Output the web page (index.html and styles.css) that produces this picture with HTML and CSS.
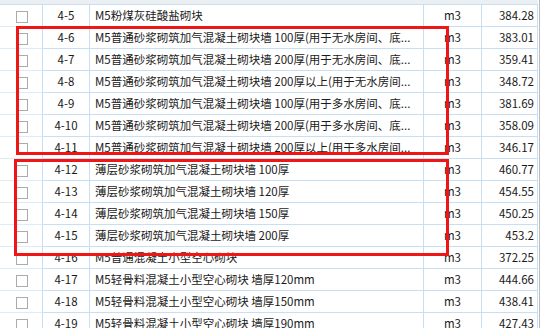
FILE: index.html
```html
<!DOCTYPE html>
<html lang="zh-CN">
<head>
<meta charset="utf-8">
<link rel="stylesheet" href="styles.css">
</head>
<body>
<div class="page">
  <div class="table">
    <div class="head"></div>
    <div class="row"><div class="c chk"><span class="box"></span></div><div class="c code">4-5</div><div class="c name">M5粉煤灰硅酸盐砌块</div><div class="c unit">m3</div><div class="c price">384.28</div></div>
    <div class="row"><div class="c chk"><span class="box"></span></div><div class="c code">4-6</div><div class="c name">M5普通砂浆砌筑加气混凝土砌块墙 100厚(用于无水房间、底...</div><div class="c unit">m3</div><div class="c price">383.01</div></div>
    <div class="row"><div class="c chk"><span class="box"></span></div><div class="c code">4-7</div><div class="c name">M5普通砂浆砌筑加气混凝土砌块墙 200厚(用于无水房间、底...</div><div class="c unit">m3</div><div class="c price">359.41</div></div>
    <div class="row"><div class="c chk"><span class="box"></span></div><div class="c code">4-8</div><div class="c name">M5普通砂浆砌筑加气混凝土砌块墙 200厚以上(用于无水房间...</div><div class="c unit">m3</div><div class="c price">348.72</div></div>
    <div class="row"><div class="c chk"><span class="box"></span></div><div class="c code">4-9</div><div class="c name">M5普通砂浆砌筑加气混凝土砌块墙 100厚(用于多水房间、底...</div><div class="c unit">m3</div><div class="c price">381.69</div></div>
    <div class="row"><div class="c chk"><span class="box"></span></div><div class="c code">4-10</div><div class="c name">M5普通砂浆砌筑加气混凝土砌块墙 200厚(用于多水房间、底...</div><div class="c unit">m3</div><div class="c price">358.09</div></div>
    <div class="row"><div class="c chk"><span class="box"></span></div><div class="c code">4-11</div><div class="c name">M5普通砂浆砌筑加气混凝土砌块墙 200厚以上(用于多水房间...</div><div class="c unit">m3</div><div class="c price">346.17</div></div>
    <div class="row"><div class="c chk"><span class="box"></span></div><div class="c code">4-12</div><div class="c name">薄层砂浆砌筑加气混凝土砌块墙 100厚</div><div class="c unit">m3</div><div class="c price">460.77</div></div>
    <div class="row"><div class="c chk"><span class="box"></span></div><div class="c code">4-13</div><div class="c name">薄层砂浆砌筑加气混凝土砌块墙 120厚</div><div class="c unit">m3</div><div class="c price">454.55</div></div>
    <div class="row"><div class="c chk"><span class="box"></span></div><div class="c code">4-14</div><div class="c name">薄层砂浆砌筑加气混凝土砌块墙 150厚</div><div class="c unit">m3</div><div class="c price">450.25</div></div>
    <div class="row"><div class="c chk"><span class="box"></span></div><div class="c code">4-15</div><div class="c name">薄层砂浆砌筑加气混凝土砌块墙 200厚</div><div class="c unit">m3</div><div class="c price">453.2</div></div>
    <div class="row"><div class="c chk"><span class="box"></span></div><div class="c code">4-16</div><div class="c name">M5普通混凝土小型空心砌块</div><div class="c unit">m3</div><div class="c price">372.25</div></div>
    <div class="row"><div class="c chk"><span class="box"></span></div><div class="c code">4-17</div><div class="c name">M5轻骨料混凝土小型空心砌块 墙厚120mm</div><div class="c unit">m3</div><div class="c price">444.66</div></div>
    <div class="row"><div class="c chk"><span class="box"></span></div><div class="c code">4-18</div><div class="c name">M5轻骨料混凝土小型空心砌块 墙厚150mm</div><div class="c unit">m3</div><div class="c price">438.41</div></div>
    <div class="row"><div class="c chk"><span class="box"></span></div><div class="c code">4-19</div><div class="c name">M5轻骨料混凝土小型空心砌块 墙厚190mm</div><div class="c unit">m3</div><div class="c price">427.43</div></div>
  </div>
  <div class="side"></div>
  <div class="mark mark1"></div>
  <div class="mark mark2"></div>
</div>
</body>
</html>
```

FILE: styles.css
```css
html, body {
  margin: 0;
  padding: 0;
  background: #ffffff;
}
.page {
  position: relative;
  display: flex;
  width: 554px;
  height: 328px;
  overflow: hidden;
  font-family: "Noto Sans CJK SC", "Noto Sans", sans-serif;
  font-size: 11.5px;
  color: #1a1a1a;
}
.table {
  width: 538px;
  flex: none;
}
.head {
  height: 5px;
  box-sizing: border-box;
  background: #eceff2;
  border-bottom: 1px solid #c6dff4;
}
.row {
  display: grid;
  grid-template-columns: 43px 47px 334px 58px 56px;
  height: 22px;
}
.c {
  box-sizing: border-box;
  height: 22px;
  border-right: 1px solid #c6dff4;
  border-bottom: 1px solid #c6dff4;
  display: flex;
  align-items: center;
  white-space: nowrap;
  overflow: hidden;
  line-height: 21px;
}
.chk {
  padding-left: 16px;
  border-bottom-color: #dcebf7;
}
.box {
  width: 12px;
  height: 12px;
  box-sizing: border-box;
  border: 1px solid #ababab;
  background: #fff;
  margin-top: 2px;
}
.code {
  justify-content: center;
}
.name {
  padding-left: 5px;
}
.unit {
  justify-content: center;
}
.price {
  justify-content: flex-end;
  padding-right: 3px;
}
.side {
  flex: 1;
  margin-left: 1px;
  border-left: 1px solid #b9b9b9;
  background: #ffffff;
}
.mark {
  position: absolute;
  box-sizing: border-box;
  border: 3px solid #f01616;
}
.mark1 {
  left: 16px;
  top: 26px;
  width: 433px;
  height: 129px;
}
.mark2 {
  left: 14px;
  top: 159px;
  width: 435px;
  height: 97px;
}
```
